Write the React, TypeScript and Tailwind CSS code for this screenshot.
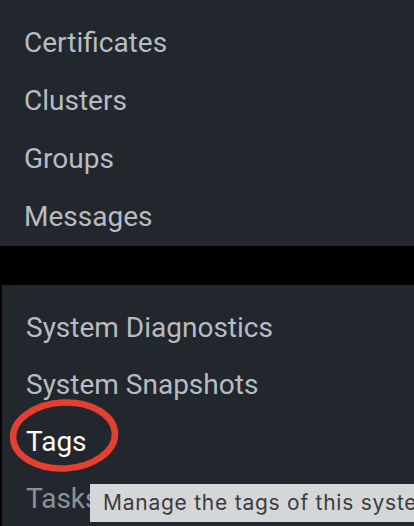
const topItems = ["Certificates", "Clusters", "Groups", "Messages"];

type Item = { label: string; tone: "normal" | "active" | "dim" };

const bottomItems: Item[] = [
  { label: "System Diagnostics", tone: "normal" },
  { label: "System Snapshots", tone: "normal" },
  { label: "Tags", tone: "active" },
  { label: "Tasks", tone: "dim" },
];

const toneClass = {
  normal: "text-[#b7bcc2]",
  active: "text-white",
  dim: "text-[#8d9298]",
};

function Highlight() {
  // hand-drawn style red circle round the "Tags" entry
  return (
    <svg
      className="pointer-events-none absolute left-[9px] top-[398px]"
      width="112"
      height="77"
      viewBox="0 0 112 77"
    >
      <ellipse
        cx="55"
        cy="37.5"
        rx="51"
        ry="33"
        fill="none"
        stroke="#e5402f"
        strokeWidth="6.5"
        transform="rotate(-3 55 37.5)"
      />
    </svg>
  );
}

export default function App() {
  return (
    <div
      className="relative h-[526px] w-[414px] overflow-hidden bg-black"
      style={{ fontFamily: "Roboto, 'Noto Sans', sans-serif" }}
    >
      <nav className="flex h-[246px] flex-col bg-[#22272e] pt-[14px]">
        {topItems.map((label) => (
          <div
            key={label}
            className="h-[58px] pl-6 text-[28px] leading-[58px] text-[#b7bcc2]"
          >
            {label}
          </div>
        ))}
      </nav>

      <nav className="ml-[2px] mt-[39px] flex h-[241px] flex-col bg-[#22272e] pt-[14px]">
        {bottomItems.map((item) => (
          <div
            key={item.label}
            className={`h-[57px] pl-6 text-[28px] leading-[58px] ${toneClass[item.tone]}`}
          >
            {item.label}
          </div>
        ))}
      </nav>

      <Highlight />

      {/* tooltip for the hovered entry */}
      <div
        className="absolute left-[90px] right-0 top-[484px] flex h-[38px] items-center overflow-hidden whitespace-nowrap bg-[#d5d6d7] pl-[13px] text-[21px] tracking-[0.75px] text-[#3b3c3e]"
        style={{ fontFamily: "Inter, 'Liberation Sans', sans-serif" }}
      >
        Manage the tags of this system
      </div>
    </div>
  );
}
